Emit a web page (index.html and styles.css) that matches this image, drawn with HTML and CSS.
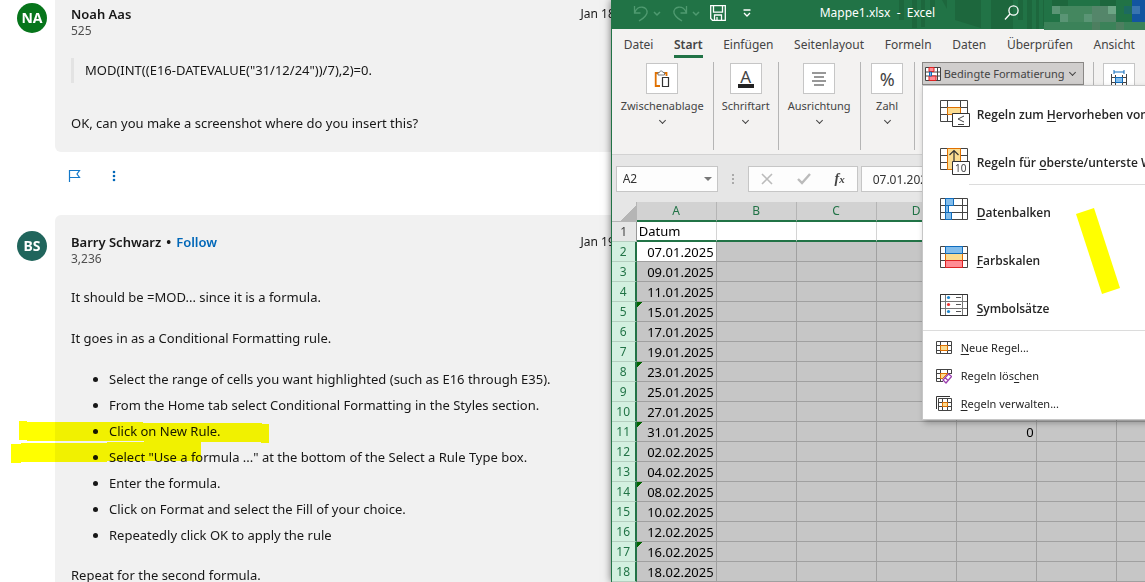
FILE: index.html
```
<!DOCTYPE html>
<html lang="de">
<head>
<meta charset="utf-8">
<title>Forum und Mappe1.xlsx</title>
<link rel="stylesheet" href="styles.css">
</head>
<body>
<div class="desktop">
<main class="forum" lang="en">
  <article class="post first">
    <span class="avatar green">NA</span>
    <div class="card">
      <header class="author"><strong>Noah Aas</strong><time>Jan 18, 2025</time></header>
      <p class="points">525</p>
      <blockquote>MOD(INT((E16-DATEVALUE("31/12/24"))/7),2)=0.</blockquote>
      <p class="line">OK, can you make a screenshot where do you insert this?</p>
    </div>
  </article>
  <div class="actions">
    <button aria-label="Report"><svg width="14" height="14" viewBox="0 0 14 14"><path d="M2.500 13V1.500H12.500L10 5l2.500 3.500H2.500" fill="none" stroke="#1479c9" stroke-width="1.200"/></svg></button>
    <button aria-label="More"><svg width="14" height="14" viewBox="0 0 14 14" fill="#0067b8"><circle cx="7" cy="3" r="1.300"/><circle cx="7" cy="7" r="1.300"/><circle cx="7" cy="11" r="1.300"/></svg></button>
  </div>
  <article class="post second">
    <span class="avatar teal">BS</span>
    <div class="card">
      <header class="author"><span class="who"><strong>Barry Schwarz</strong><b>•</b><a href="#">Follow</a></span><time>Jan 19, 2025</time></header>
      <p class="points">3,236</p>
      <p class="line">It should be =MOD... since it is a formula.</p>
      <p class="line">It goes in as a Conditional Formatting rule.</p>
      <ul>
        <li>Select the range of cells you want highlighted (such as E16 through E35).</li>
        <li>From the Home tab select Conditional Formatting in the Styles section.</li>
        <li>Click on New Rule.</li>
        <li>Select "Use a formula ..." at the bottom of the Select a Rule Type box.</li>
        <li>Enter the formula.</li>
        <li>Click on Format and select the Fill of your choice.</li>
        <li>Repeatedly click OK to apply the rule</li>
      </ul>
      <p class="line">Repeat for the second formula.</p>
    </div>
    <svg class="marker" width="260" height="44" viewBox="0 0 260 44"><path fill="#ff0" d="M8 0H16V1H132V2H251V3H258V22H250V21H133V20H16V19H8ZM0 23H10V22H96V21H190V40H96V41H10V42H0Z"/></svg>
  </article>
</main>

<section class="excel">
  <header class="titlebar">
    <svg class="pattern" width="230" height="29" viewBox="0 0 230 29" preserveAspectRatio="xMinYMin"><g fill="#1d673d"><path d="M42 0h5v20h-5zM55 0h5v28h-5zM64 0h4v27h-4zM73 0h5v12h-5zM85 0h5v9zM98 0h26v28L98 20zM134 0h22v29h-22zM161 0h5v20h-5zM170 0h5v29h-5zM179 0h3v29h-3zM186 0h3v26h-3zM193 0h2v23h-2zM199 0h2v19h-2z"/></g></svg>
    <div class="quick">
      <button aria-label="Rückgängig"><svg width="29" height="20" viewBox="0 0 29 20" fill="none" stroke="#4f9a70"><path d="M2.500 3v7h6M3 9C6 2 16 3 15 10c-1 4-5 6-8 8" stroke-width="1.300"/><path d="M22 9l3 3 3-3" stroke-width="1.500"/></svg></button>
      <button aria-label="Wiederholen"><svg width="29" height="20" viewBox="0 0 29 20" fill="none" stroke="#4f9a70"><path d="M15.500 3v7h-6M15 9C12 2 2 3 3 10c1 4 5 6 8 8" stroke-width="1.300"/><path d="M22 9l3 3 3-3" stroke-width="1.500"/></svg></button>
      <button aria-label="Speichern"><svg width="16" height="16" viewBox="0 0 16 16" fill="none" stroke="#fff" stroke-width="1.300"><path d="M.7.7h14.600v14.600H2.500L.7 13.500zM3.500.7v6.500h9V.7M4.500 15v-5h7v5M7 15v-3"/></svg></button>
      <button aria-label="Anpassen"><svg width="8" height="8" viewBox="0 0 8 8" fill="none" stroke="#fff" stroke-width="1.300"><path d="M.5 1h7M1 4l3 3 3-3"/></svg></button>
    </div>
    <span class="doc">Mappe1.xlsx &nbsp;-&nbsp; Excel</span>
    <button class="search" aria-label="Suchen"><svg width="16" height="16" viewBox="0 0 16 16" fill="none" stroke="#fff" stroke-width="1.300"><circle cx="9.500" cy="5.500" r="4.600"/><path d="M6 9L1 14.500"/></svg></button>
    <svg class="mosaic" width="101" height="30" viewBox="0 0 101 30"><path fill="#217346" d="M0 0h101v22H0z"/><path fill="#1d673d" d="M8 0h16v6H8zM56 0h16v6H56z"/><path fill="#3b8259" d="M0 22h101v8H0z"/><path fill="#4d7f60" d="M48 22h8v8h-8zM72 22h8v8h-8z"/><path fill="#5a9575" d="M8 6h8v8H8zM16 14h8v8h-8zM40 14h8v8h-8z"/><path fill="#44875f" d="M16 6h32v8H16zM24 14h16v8H24z"/><path fill="#54866a" d="M48 6h16v16H48zM64 14h8v8h-8z"/><path fill="#6da585" d="M64 6h8v8h-8z"/><path fill="#1c6a60" d="M80 6h8v8h-8z"/><path fill="#1255a0" d="M88 0h13v22H88z"/><path fill="#3874b0" d="M88 6h8v8h-8z"/></svg>
  </header>
  <nav class="tabs">
    <a href="#">Datei</a><a href="#" class="active">Start</a><a href="#">Einfügen</a><a href="#">Seitenlayout</a><a href="#">Formeln</a><a href="#">Daten</a><a href="#">Überprüfen</a><a href="#">Ansicht</a>
  </nav>
  <div class="ribbon">
    <button class="group clip"><span class="tile"><svg width="16" height="18" viewBox="0 0 16 18" fill="none"><path d="M4 3H1.700v13H6M10 3h2.500v3" stroke="#e07000" stroke-width="1.800"/><path d="M4 5V2.500h1.500C5.500.5 9 .5 9 2.500h1.500V5z" fill="#fff" stroke="#777"/><path d="M8.500 7.500h6v9h-6z" fill="#fff" stroke="#333" stroke-width="1.200"/></svg></span>Zwischenablage<i class="chev"></i></button>
    <button class="group font"><span class="tile"><span class="letter">A</span></span>Schriftart<i class="chev"></i></button>
    <button class="group align"><span class="tile"><svg width="16" height="14" viewBox="0 0 16 14" stroke="#333" stroke-width="1.200"><path d="M1 1h14M3 5h10M1 9h14M3 13h10"/></svg></span>Ausrichtung<i class="chev"></i></button>
    <button class="group num"><span class="tile percent">%</span>Zahl<i class="chev"></i></button>
    <div class="styles">
      <button class="cond"><svg width="16" height="14" viewBox="0 0 16 14" fill="none"><path d="M.5.5h15v13H.5zM.5 5h15M.5 9h15M12.500 0v14" fill="#fff" stroke="#444"/><path d="M4 .5h5v4H4zM4 9h7v4.500H4z" fill="#ff8c94" stroke="#d22"/><path d="M4.500 5h2v4h-2z" fill="#83bdeb" stroke="#0f6cbd"/></svg>Bedingte Formatierung<i class="chev"></i></button>
      <div class="menu">
        <button class="big"><svg width="32" height="28" viewBox="0 0 32 28" fill="none"><path d="M.5.5h27v21H.5zM.5 7.500h27M.5 14.500h27M7.500 0v22M20.500 0v22" fill="#fff" stroke="#444"/><path d="M7.500 7.500h13v7h-13z" fill="#fbdc91" stroke="#e07000"/><path d="M12.500 13.500h17v13h-17z" fill="#fff" stroke="#333"/><path d="M24 16l-6 3 6 3M18 24.500h6" stroke="#444"/></svg><span>Regeln zum <u>H</u>ervorheben von Zellen</span></button>
        <button class="big"><svg width="32" height="28" viewBox="0 0 32 28" fill="none"><path d="M.5.5h27v21H.5zM.5 7.500h27M.5 14.500h27" fill="#fff" stroke="#444"/><path d="M7.500.5h13v21h-13z" fill="#fbdc91" stroke="#e07000"/><path d="M14 13V3M9.500 7L14 2.500 18.500 7" stroke="#333" stroke-width="1.200"/><path d="M12.500 13.500h17v13h-17z" fill="#fff" stroke="#333"/><text x="15" y="24" class="ten">10</text></svg><span>Regeln für <u>o</u>berste/unterste Werte</span></button>
        <hr class="inset">
        <button class="big"><svg width="32" height="28" viewBox="0 0 32 28" fill="none"><path d="M.5.500h27v21H.5zM.5 7.500h27M.5 14.500h27M22.500 0v22" fill="#fff" stroke="#444"/><path d="M5.500.5h8v7h-8zM5.500 7.500h3v7h-3zM5.500 14.500h6v7h-6z" fill="#83bdeb" stroke="#0f6cbd"/></svg><span><u>D</u>atenbalken</span></button>
        <button class="big"><svg width="32" height="28" viewBox="0 0 32 28" fill="none"><path d="M.5.5h27v21H.5zM.5 7.500h27M.5 14.500h27" fill="#fff" stroke="#444"/><path d="M5.500 7.500h17v7h-17z" fill="#fbdc91" stroke="#e07000"/><path d="M5.500.5h17v7h-17z" fill="#83bdeb" stroke="#0f6cbd"/><path d="M5.500 14.500h17v7h-17z" fill="#ff8c94" stroke="#d22"/></svg><span><u>F</u>arbskalen</span></button>
        <button class="big"><svg width="32" height="28" viewBox="0 0 32 28" fill="none"><path d="M.5.5h27v21H.5zM.5 7.500h27M.5 14.500h27M5.500 0v22M22.500 0v22" fill="#fff" stroke="#777"/><path d="M.5.5h27v21H.5z" stroke="#333"/><path d="M16 3.500h5M16 10.500h5M16 17.500h5" stroke="#555"/><g fill="#1e88d0"><circle cx="8.500" cy="3.500" r="1.600"/><circle cx="8.500" cy="17.500" r="1.600"/></g><circle cx="8.500" cy="10.500" r="1.600" fill="#e33"/></svg><span><u>S</u>ymbolsätze</span></button>
        <hr>
        <button class="small"><svg width="16" height="16" viewBox="0 0 16 16" fill="none"><path d="M.5 1.500h15v12H.5zM.5 5.500h15M.5 10.500h15M4.500 1v12.500M11.500 1v12.500" fill="#fff" stroke="#444"/><path d="M4.500 5.500h7v5h-7z" fill="#fbdc91" stroke="#e07000"/></svg><span><u>N</u>eue Regel...</span></button>
        <button class="small"><svg width="16" height="16" viewBox="0 0 16 16" fill="none"><path d="M15.500 6V1.500H.5v12H7M.5 5.500h15M.5 10.500H7M4.500 1v12.500M11.500 1v4" stroke="#444"/><path d="M4.500 5.500h7l-5 5h-2z" fill="#fbdc91" stroke="#e07000"/><path d="M7 12l5.500-6 3 2.500-5.500 6.500zM9 9.500l3 3" fill="#fff" stroke="#9b3fae" stroke-width="1.300"/></svg><span>Regeln lös<u>c</u>hen</span></button>
        <button class="small"><svg width="16" height="16" viewBox="0 0 16 16" fill="none"><path d="M.5 13V.5H14" stroke="#333"/><path d="M2.500 2.500h13v12h-13zM2.500 6.500h13M2.500 10.500h13M6.500 2v12.500M11.500 2v12.500" fill="#fff" stroke="#444"/><path d="M6.500 6.500h5v4h-5z" fill="#fbdc91" stroke="#e07000"/></svg><span><u>R</u>egeln verwalten...</span></button>
        <svg class="stroke" width="46" height="88" viewBox="0 0 46 88"><path fill="#ff0" d="M0 6L18 0 44 80 26 86z"/></svg>
      </div>
    </div>
    <button class="group cells" aria-label="Zellen"><span class="tile"><svg width="18" height="18" viewBox="0 0 18 18" fill="none"><path d="M4 2h10M4 0v4M14 0v4" stroke="#0f6cbd"/><path d="M1.500 4v14M16.500 4v14M1 7.500h16M1 12.500h16M5.500 5v13M12.500 5v13" stroke="#444"/><path d="M5.500 7.500h7v5h-7z" fill="#83bdeb" stroke="#0f6cbd"/></svg></span></button>
  </div>
  <div class="formulabar">
    <div class="namebox"><input aria-label="Namenfeld" value="A2"><i class="tri"></i></div>
    <svg class="dots" width="4" height="12" viewBox="0 0 4 12" fill="#aaa"><path d="M1 1h2v2H1zM1 5h2v2H1zM1 9h2v2H1z"/></svg>
    <div class="fxbox">
      <button aria-label="Abbrechen"><svg width="12" height="12" viewBox="0 0 12 12" stroke="#bbb" stroke-width="1.600"><path d="M1 1l10 10M11 1L1 11"/></svg></button>
      <button aria-label="Eingeben"><svg width="14" height="12" viewBox="0 0 14 12" fill="none" stroke="#bbb" stroke-width="2.400"><path d="M1 6l4 4L13 1"/></svg></button>
      <button class="fx" aria-label="Funktion einfügen">f<small>x</small></button>
    </div>
    <input class="formula" aria-label="Bearbeitungsleiste" value="07.01.2025">
  </div>
  <div class="sheet">
  <table>
    <thead><tr><th class="corner"></th><th>A</th><th>B</th><th>C</th><th>D</th><th></th><th></th><th></th><th></th></tr></thead>
    <tbody>
    <tr class="plain"><th>1<td class="text">Datum<td><td><td><td><td><td><td></tr>
    <tr><th>2<td class="current">07.01.2025<td><td><td><td><td><td><td></tr>
    <tr><th>3<td>09.01.2025<td><td><td><td><td><td><td></tr>
    <tr><th>4<td>11.01.2025<td><td><td><td><td><td><td></tr>
    <tr><th>5<td class="flag">15.01.2025<td><td><td><td><td><td><td></tr>
    <tr><th>6<td>17.01.2025<td><td><td><td><td><td><td></tr>
    <tr><th>7<td>19.01.2025<td><td><td><td><td><td><td></tr>
    <tr><th>8<td class="flag">23.01.2025<td><td><td><td><td><td><td></tr>
    <tr><th>9<td>25.01.2025<td><td><td><td><td><td><td></tr>
    <tr><th>10<td>27.01.2025<td><td><td><td><td><td><td></tr>
    <tr><th>11<td class="flag">31.01.2025<td><td><td><td>0<td><td><td></tr>
    <tr><th>12<td>02.02.2025<td><td><td><td><td><td><td></tr>
    <tr><th>13<td>04.02.2025<td><td><td><td><td><td><td></tr>
    <tr><th>14<td class="flag">08.02.2025<td><td><td><td><td><td><td></tr>
    <tr><th>15<td>10.02.2025<td><td><td><td><td><td><td></tr>
    <tr><th>16<td>12.02.2025<td><td><td><td><td><td><td></tr>
    <tr><th>17<td class="flag">16.02.2025<td><td><td><td><td><td><td></tr>
    <tr><th>18<td>18.02.2025<td><td><td><td><td><td><td></tr>
    </tbody>
  </table>
  </div>
</section>
</div>
</body>
</html>
```
FILE: styles.css
```
* { box-sizing: border-box; }
body { margin: 0; background: #fff; color: #171717; font: 13px/20px "Noto Sans", "Open Sans", sans-serif; }
button { font: inherit; color: inherit; border: 0; background: none; padding: 0; }
a { text-decoration: none; color: inherit; }
p, ul, blockquote { margin: 0; }
svg { display: block; flex: none; }

.desktop { display: grid; grid-template-columns: 8fr 7fr; height: 100vh; overflow: hidden; }

/* forum thread */
.forum { min-width: 0; overflow: hidden; }
.post { position: relative; display: flex; gap: 8px; padding-left: 17px; margin-right: -54px; }
.avatar { flex: none; width: 30px; height: 30px; border-radius: 50%; color: #fff; font: bold 14px/30px "Noto Sans", sans-serif; text-align: center; }
.green { background: #07751b; margin-top: 3px; }
.teal { background: #20655c; margin-top: 16px; }
.card { flex: 1; background: #f1f1f1; padding: 5px 16px 19px; border-radius: 0 0 6px 6px; }
.second .card { padding-top: 18px; border-radius: 6px 6px 0 0; }
.author { display: flex; justify-content: space-between; line-height: 18px; }
.author strong { font-weight: 600; }
.author a { color: #0067b8; font-weight: 600; }
.author time { font-size: 12px; }
.who { display: flex; gap: 5px; }
.points { font-size: 12px; line-height: 16px; color: #505050; }
blockquote { border-left: 3px solid #e3e3e3; padding: 2px 0 3px 11px; margin: 19px 0 30px; }
.card .line { margin-bottom: 21px; }
.first .line { margin-bottom: 0; }
.second .points { margin-bottom: 20px; }
.card ul { padding-left: 38px; margin-bottom: 20px; display: grid; gap: 6px; }
.actions { display: flex; gap: 26px; padding: 17px 0 32px 67px; }
.marker { position: absolute; left: 11px; top: 206px; mix-blend-mode: multiply; }

/* spreadsheet window */
.excel { position: relative; min-width: 0; overflow: hidden; border-left: 1px solid #217346; box-shadow: 0 0 8px #0008; background: #e6e6e6; color: #444; font-size: 12px; line-height: 18px; display: flex; flex-direction: column; }
.titlebar { position: relative; height: 29px; flex: none; display: flex; align-items: center; background: #217346; color: #fff; padding: 0 0 4px 20px; }
.pattern { position: absolute; left: 46%; top: 0; }
.quick { position: relative; display: flex; gap: 10px; align-items: center; }
.quick button:last-child { margin-left: 7px; }
.doc { position: relative; flex: 1; padding-left: 69px; }
.search { position: relative; margin-right: 24px; }
.mosaic { position: relative; align-self: flex-start; }
.tabs { display: flex; justify-content: space-between; padding: 6px 10px 0 12px; background: #f3f2f1; }
.tabs a { padding-bottom: 1px; line-height: 19px; border-bottom: 3px solid transparent; }
.tabs .active { font-weight: 600; border-color: #217346; }
.ribbon { display: flex; background: #f3f2f1; padding: 4px 0; border-bottom: 1px solid #d2d2d2; height: 97px; font-size: 11px; }
.group { flex: none; display: flex; flex-direction: column; align-items: center; border-right: 1px solid #b5b5b5; line-height: 24px; }
.clip { width: 102px; } .font { width: 65px; } .align { width: 82px; } .num { width: 54px; } .cells { width: 50px; border: 0; }
.tile { width: 32px; height: 31px; margin-top: 1px; flex: none; border: 1px solid #c6c6c6; background: #fff; display: flex; align-items: center; justify-content: center; }
.percent { font-size: 18px; }
.letter { font-size: 17px; line-height: 15px; border-bottom: 4px solid #222; width: 16px; text-align: center; }
.chev { flex: none; width: 5px; height: 5px; border: solid #444; border-width: 0 1px 1px 0; rotate: 45deg; }
.styles { position: relative; margin-left: 7px; padding-right: 9px; border-right: 1px solid #b5b5b5; }
.cond { display: flex; align-items: center; gap: 3px; width: 162px; height: 23px; padding: 0 2px; background: #d0cecd; border: 1px solid #8a8886; white-space: nowrap; }
.cond .chev { margin: 0 0 3px 2px; }
.menu { position: absolute; z-index: 2; top: 23px; left: 0; width: 272px; padding: 4px 0 1px; background: #fff; border: 1px solid #c6c6c6; box-shadow: 2px 3px 6px #0004; color: #262626; white-space: nowrap; }
.menu button { display: flex; align-items: center; }
.menu .big { height: 48px; padding-left: 17px; gap: 5px; font: 600 12px "Open Sans", "Noto Sans", sans-serif; }
.small { height: 28px; padding-left: 13px; gap: 9px; }
.menu u { text-underline-offset: 2px; }
.menu hr { border: 0; border-top: 1px solid #dcdcdc; margin: -2px 0 3px; }
.menu .inset { margin-left: 46px; }
.ten { font: 10px "Noto Sans", sans-serif; fill: #444; }
.stroke { position: absolute; left: 153px; top: 122px; }
.formulabar { display: flex; align-items: center; padding: 11px 0 10px; flex: none; }
.formulabar input { border: 0; background: none; font: inherit; color: #333; outline: 0; padding: 0; min-width: 0; }
.namebox, .fxbox, .formulabar .formula { height: 26px; background: #fdfdfd; border: 1px solid #c6c6c6; display: flex; align-items: center; }
.namebox { width: 102px; margin-left: 4px; padding: 0 5px 0 6px; }
.namebox input { flex: 1; }
.tri { border: 4px solid transparent; border-top-color: #777; border-bottom: 0; }
.dots { margin: 0 13px; }
.fxbox { width: 110px; justify-content: space-around; }
.fx { font: italic bold 14px "Liberation Serif", serif; }
.fx small { font-size: 11px; }
.formulabar .formula { flex: 1; margin-left: 3px; padding-left: 11px; }
.sheet { overflow: hidden; }
table { border-collapse: separate; border-spacing: 0; table-layout: fixed; width: 585px; color: #000; }
th, td { height: 20px; padding: 0; line-height: 18px; overflow: hidden; border: solid #a0a0a0; border-width: 0 1px 1px 0; }
td { width: 80px; text-align: right; padding-right: 2px; background: #c6c6c6; font-size: 13px; }
th { width: 80px; font-weight: 400; color: #217346; background: #d2d2d2; }
thead th { border-bottom: 2px solid #217346; border-right-color: #b5b5b5; }
tbody th { background: #d3f0e0; border-right: 2px solid #217346; border-bottom-color: #b5cfc0; }
.corner { width: 25px; background: linear-gradient(135deg, #e6e6e6 65%, #b5b5b5 65%); border-bottom: 1px solid #b5b5b5; }
.plain th { background: #e6e6e6; color: #444; border-right: 1px solid #999; }
.plain td { background: #fff; border-right-color: #d4d4d4; border-bottom: 2px solid #217346; }
.plain .text { text-align: left; padding-left: 2px; }
td.current { background: #fff; }
td.flag { background: linear-gradient(135deg, #006400 4px, #c6c6c6 4px); }
```
